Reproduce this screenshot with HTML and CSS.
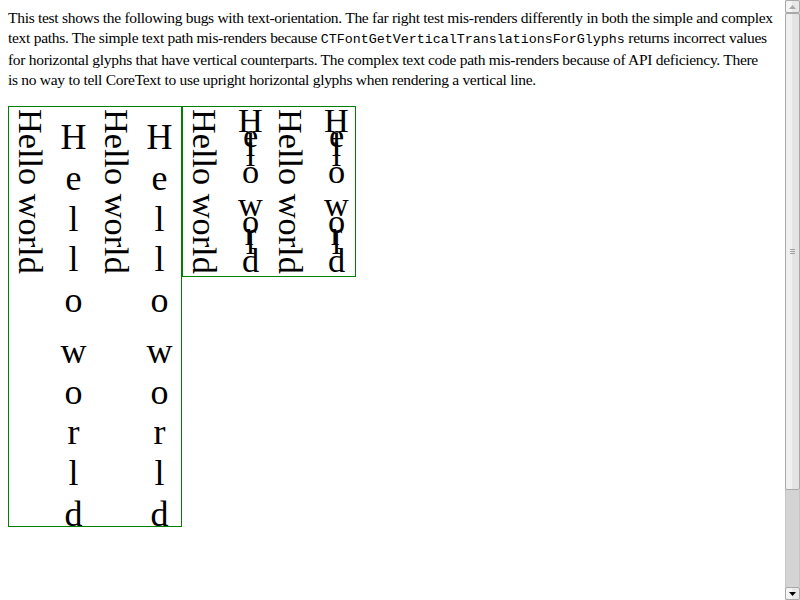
FILE: index.html
```html
<!DOCTYPE html>
<html lang="en">
<head>
    <meta charset="UTF-8">
    <title>text-orientation bugs</title>
    <link rel="stylesheet" href="styles.css">
</head>
<body>
    <p class="intro">This test shows the following bugs with text-orientation. The far right test mis-renders differently in both the simple and complex text paths. The simple text path mis-renders because <code>CTFontGetVerticalTranslationsForGlyphs</code> returns incorrect values for horizontal glyphs that have vertical counterparts. The complex text code path mis-renders because of API deficiency. There is&nbsp;no way to tell CoreText to use upright horizontal glyphs when rendering a vertical line.</p>

    <div class="tests">
        <!-- Expected rendering -->
        <div class="box">
            <div class="col sideways">Hello world</div>
            <div class="col upright">
                <span>H</span><span>e</span><span>l</span><span>l</span><span>o</span><span class="gap"> </span><span>w</span><span>o</span><span>r</span><span>l</span><span>d</span>
            </div>
            <div class="col sideways">Hello world</div>
            <div class="col upright">
                <span>H</span><span>e</span><span>l</span><span>l</span><span>o</span><span class="gap"> </span><span>w</span><span>o</span><span>r</span><span>l</span><span>d</span>
            </div>
        </div>

        <!-- Broken rendering: upright glyphs advance by their horizontal widths -->
        <div class="box">
            <div class="col sideways">Hello world</div>
            <div class="col squashed">
                <span class="w-h">H</span><span class="w-e">e</span><span class="w-l">l</span><span class="w-l">l</span><span class="w-o">o</span><span class="w-sp"> </span><span class="w-w">w</span><span class="w-o">o</span><span class="w-r">r</span><span class="w-l">l</span><span class="w-d">d</span>
            </div>
            <div class="col sideways">Hello world</div>
            <div class="col squashed">
                <span class="w-h">H</span><span class="w-e">e</span><span class="w-l">l</span><span class="w-l">l</span><span class="w-o">o</span><span class="w-sp"> </span><span class="w-w">w</span><span class="w-o">o</span><span class="w-r">r</span><span class="w-l">l</span><span class="w-d">d</span>
            </div>
        </div>
    </div>

    <div class="scrollbar">
        <div class="sb-btn">
            <svg width="7" height="4" viewBox="0 0 7 4"><path d="M0 4 L3.5 0 L7 4 Z" fill="#a8a8a8"/></svg>
        </div>
        <div class="sb-thumb">
            <div class="grip"><i></i><i></i><i></i></div>
        </div>
        <div class="sb-track"></div>
        <div class="sb-btn">
            <svg width="7" height="4" viewBox="0 0 7 4"><path d="M0 0 L7 0 L3.5 4 Z" fill="#000"/></svg>
        </div>
    </div>
</body>
</html>
```

FILE: styles.css
```css
html {
    overflow: hidden;
    background: white;
}

body {
    margin: 8px 23px 8px 8px;
    font-family: "Liberation Serif", "Times New Roman", serif;
    color: #000;
}

.intro {
    margin: 0 0 16px;
    font-size: 15.5px;
    letter-spacing: -0.29px;
    line-height: 20px;
}

code {
    font-family: "Liberation Mono", "Courier New", monospace;
    font-size: 13.33px;
    letter-spacing: 0;
}

.tests {
    display: flex;
    align-items: flex-start;
}

.box {
    display: flex;
    border: 1px solid #008000;
    font-size: 34.3px;
}

.col {
    width: 43px;
    flex: none;
    box-sizing: border-box;
}

.sideways {
    writing-mode: vertical-rl;
    text-orientation: sideways;
    line-height: 43px;
    white-space: nowrap;
    padding: 2px 0;
}

/* upright glyphs, one per vertical slot */
.upright {
    display: flex;
    flex-direction: column;
    align-items: center;
    padding-top: 2px;
    font-size: 36px;
}

.upright span {
    display: flex;
    align-items: flex-end;
    height: 40.7px;
    line-height: 0.675em;
}

.upright .gap {
    height: 10px;
}

.squashed {
    display: flex;
    flex-direction: column;
    align-items: center;
    padding: 2px 0 0 6px;
}

.squashed span {
    display: flex;
    align-items: flex-end;
    line-height: calc(0.675em + 4px);
    white-space: pre;
}

.w-h, .w-w { height: 0.722em; }
.w-e { height: 0.444em; }
.w-l { height: 0.278em; }
.w-o, .w-d { height: 0.5em; }
.w-r { height: 0.333em; }
.w-sp { height: 0.25em; }

/* scrollbar drawn over the right edge */
.scrollbar {
    position: fixed;
    top: 0;
    right: 0;
    width: 15px;
    height: 600px;
    display: flex;
    flex-direction: column;
    background: #d4d4d4;
}

.sb-btn {
    height: 13px;
    flex: none;
    display: flex;
    align-items: center;
    justify-content: center;
    background: linear-gradient(to right, #f4f4f4 50%, #e8e8e8 50%);
    border: 1px solid #a8a8a8;
    border-radius: 2px;
    box-sizing: border-box;
}

.sb-thumb {
    height: 477px;
    flex: none;
    display: flex;
    align-items: center;
    justify-content: center;
    background: linear-gradient(to right, #f0f0f0 50%, #e3e3e3 50%);
    border: 1px solid #a8a8a8;
    border-radius: 2px;
    box-sizing: border-box;
}

.grip {
    display: flex;
    flex-direction: column;
    gap: 1px;
}

.grip i {
    display: block;
    width: 5px;
    height: 1px;
    background: #a0a0a0;
}

.sb-track {
    flex: 1;
    border-left: 1px solid #c4c4c4;
    border-right: 1px solid #c4c4c4;
}
```
